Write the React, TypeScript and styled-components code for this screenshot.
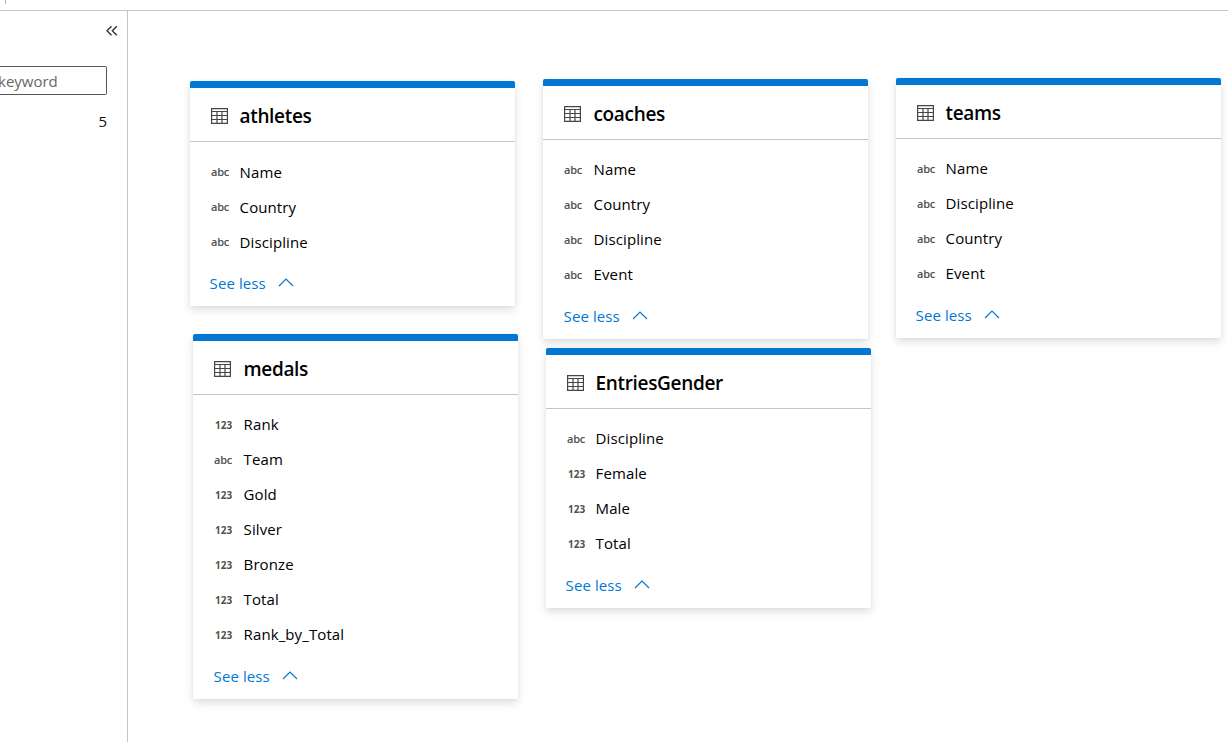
import React from 'react';
import styled, { createGlobalStyle } from 'styled-components';

const GlobalStyle = createGlobalStyle`
  * { box-sizing: border-box; }
  html, body { margin: 0; padding: 0; overflow: hidden; background: #fff; }
  body { font-family: "Open Sans", "Noto Sans", sans-serif; color: #000; }
`;

const Page = styled.div`
  display: flex;
  flex-direction: column;
  width: 1228px;
  height: 742px;
  background: #fff;
  overflow: hidden;
`;

const TopStrip = styled.div`
  flex: none;
  height: 11px;
  border-bottom: 1px solid #c4c4c4;
`;

const StripDivider = styled.div`
  width: 1px;
  height: 4px;
  margin-left: 5px;
  background: #b8b8b8;
`;

const Main = styled.div`
  display: flex;
  flex: 1;
  min-height: 0;
`;

const Sidebar = styled.aside`
  display: flex;
  flex-direction: column;
  align-items: flex-end;
  width: 128px;
  border-right: 1px solid #c4c4c4;
`;

const CollapseButton = styled.button`
  display: flex;
  width: 12px;
  height: 12px;
  margin: 14px 9px 0 0;
  padding: 0;
  border: 0;
  background: none;
`;

const SearchBox = styled.div`
  display: flex;
  align-items: center;
  width: 107px;
  height: 29px;
  margin: 29px 20px 0 0;
  border: 1px solid #555;
  border-left: 0;
  border-radius: 0 2px 2px 0;
  font-size: 15px;
  color: #666;
`;

const SearchText = styled.span`
  margin-left: -2px;
  line-height: 20px;
  padding-top: 1px;
`;

const Count = styled.div`
  margin: 16px 20px 0 0;
  font-size: 15px;
  line-height: 20px;
  color: #111;
`;

const Canvas = styled.main`
  position: relative;
  flex: 1;
`;

const Card = styled.section<{ $x: number; $y: number; $inset: number; $drop: number }>`
  position: absolute;
  left: ${(p) => p.$x}px;
  top: ${(p) => p.$y}px;
  width: 325px;
  padding-bottom: ${(p) => 12 - p.$drop}px;
  border-top: 7px solid #0078d4;
  border-radius: 2px 2px 0 0;
  background: #fff;
  box-shadow: 0 4px 9px rgba(0, 0, 0, 0.13), 0 0 3px rgba(0, 0, 0, 0.05);
  --inset: ${(p) => p.$inset}px;
  --drop: ${(p) => p.$drop}px;
`;

const CardHeader = styled.header`
  display: flex;
  align-items: center;
  height: 54px;
  padding-left: 21px;
  border-bottom: 1px solid #c4c4c4;
`;

const TableIcon = styled.svg`
  flex: none;
  width: 17px;
  height: 16px;
  margin: 2px calc(var(--inset) - 38px) 0 0;
`;

const Title = styled.h2`
  margin: 0 0 0 -0.5px;
  padding-top: 2px;
  font-size: 19px;
  font-weight: 600;
  line-height: 26px;
  letter-spacing: -0.33px;
`;

const Fields = styled.ul`
  margin: 0;
  padding: calc(11px + var(--drop)) 0 0;
  list-style: none;
`;

const FieldRow = styled.li`
  display: flex;
  align-items: center;
  height: 35px;
`;

const TypeTag = styled.span<{ $numeric: boolean }>`
  width: calc(var(--inset) - 0.4px);
  padding: calc(2px - 2 * var(--drop)) 0 0 ${(p) => (p.$numeric ? 22 : 21)}px;
  font-size: ${(p) => (p.$numeric ? 10 : 11)}px;
  font-weight: ${(p) => (p.$numeric ? 700 : 600)};
  line-height: 14px;
  letter-spacing: ${(p) => (p.$numeric ? 0 : -0.2)}px;
  color: #505050;
`;

const FieldName = styled.span`
  font-size: 15px;
  line-height: 20px;
  letter-spacing: 0.1px;
`;

const SeeLess = styled.button`
  display: flex;
  align-items: center;
  height: 36px;
  padding: calc(14px - 2 * var(--drop)) 0 0 calc(var(--inset) - 30.4px);
  border: 0;
  background: none;
  font: 15px/20px "Open Sans", "Noto Sans", sans-serif;
  letter-spacing: 0.1px;
  color: #0078d4;
`;

const Chevron = styled.svg`
  width: 16px;
  height: 9px;
  margin: 0 0 1px 12px;
`;

type Kind = 'abc' | '123';
interface Entity {
  name: string;
  x: number;
  y: number;
  inset: number;
  drop: number;
  fields: [Kind, string][];
}

const entities: Entity[] = [
  { name: 'athletes', x: 62, y: 70, inset: 50, drop: 1,
    fields: [['abc', 'Name'], ['abc', 'Country'], ['abc', 'Discipline']] },
  { name: 'coaches', x: 415, y: 68, inset: 51, drop: 0,
    fields: [['abc', 'Name'], ['abc', 'Country'], ['abc', 'Discipline'], ['abc', 'Event']] },
  { name: 'teams', x: 768, y: 67, inset: 50, drop: 0,
    fields: [['abc', 'Name'], ['abc', 'Discipline'], ['abc', 'Country'], ['abc', 'Event']] },
  { name: 'medals', x: 65, y: 323, inset: 51, drop: 0,
    fields: [['123', 'Rank'], ['abc', 'Team'], ['123', 'Gold'], ['123', 'Silver'], ['123', 'Bronze'], ['123', 'Total'], ['123', 'Rank_by_Total']] },
  { name: 'EntriesGender', x: 418, y: 337, inset: 50, drop: 0,
    fields: [['abc', 'Discipline'], ['123', 'Female'], ['123', 'Male'], ['123', 'Total']] },
];

function EntityCard({ entity }: { entity: Entity }) {
  return (
    <Card $x={entity.x} $y={entity.y} $inset={entity.inset} $drop={entity.drop}>
      <CardHeader>
        <TableIcon viewBox="0 0 17 16" fill="none" stroke="#484644" strokeWidth="1.2">
          <path d="M.6 .6h15.8v14.8H.6zM.5 3.5h16M.5 7.5h16M.5 11.5h16M6 3.5v12M11 3.5v12" />
        </TableIcon>
        <Title>{entity.name}</Title>
      </CardHeader>
      <Fields>
        {entity.fields.map(([kind, label]) => (
          <FieldRow key={label}>
            <TypeTag $numeric={kind === '123'}>{kind}</TypeTag>
            <FieldName>{label}</FieldName>
          </FieldRow>
        ))}
      </Fields>
      <SeeLess>
        See less
        <Chevron viewBox="0 0 16 9" fill="none" stroke="#0078d4" strokeWidth="1.2">
          <path d="M1 8l7-7 7 7" />
        </Chevron>
      </SeeLess>
    </Card>
  );
}

export default function App() {
  return (
    <>
      <GlobalStyle />
      <Page>
        <TopStrip>
          <StripDivider />
        </TopStrip>
        <Main>
          <Sidebar>
            <CollapseButton aria-label="Collapse">
              <svg width="12" height="12" viewBox="0 0 12 12" fill="none" stroke="#333" strokeWidth="1.4">
                <path d="M5.5 1.2L1 5.7l4.5 4.5M10.8 1.2L6.3 5.7l4.5 4.5" />
              </svg>
            </CollapseButton>
            <SearchBox>
              <SearchText>keyword</SearchText>
            </SearchBox>
            <Count>5</Count>
          </Sidebar>
          <Canvas>
            {entities.map((entity) => (
              <EntityCard key={entity.name} entity={entity} />
            ))}
          </Canvas>
        </Main>
      </Page>
    </>
  );
}
